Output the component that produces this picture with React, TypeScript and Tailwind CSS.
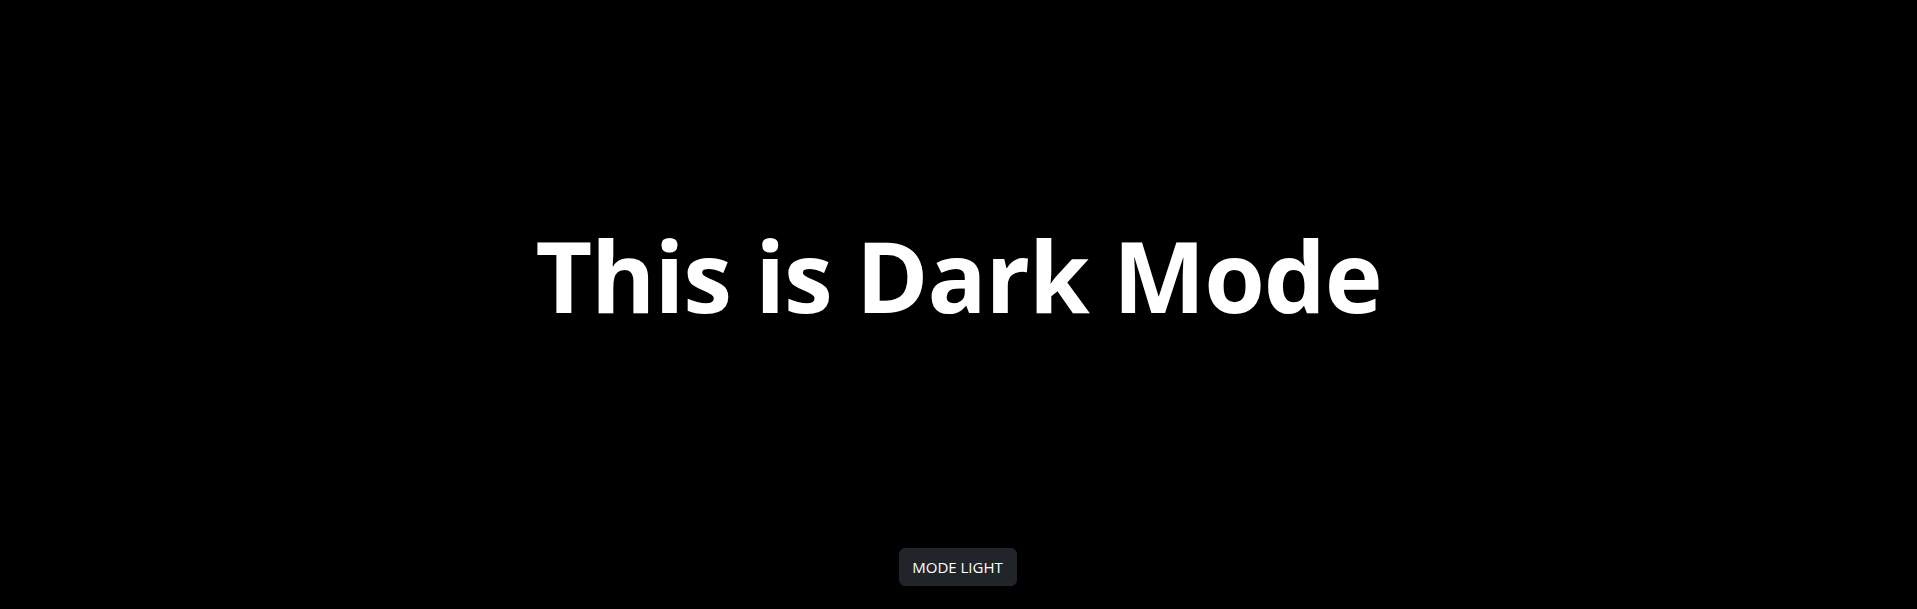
const App = () => {
  return (
    <div className="flex h-[609px] w-full flex-col items-center bg-black font-['Open_Sans',sans-serif]">
      <h1 className="mt-[217px] text-[98px] font-bold leading-[1.2] tracking-[-1.1px] text-white">
        This is Dark Mode
      </h1>
      <button className="mt-auto mb-[23px] h-[38px] w-[118px] -translate-x-px rounded-md border border-[#212529] bg-[#212529] text-[15px] leading-6 text-white">
        MODE LIGHT
      </button>
    </div>
  );
};

export default App;
